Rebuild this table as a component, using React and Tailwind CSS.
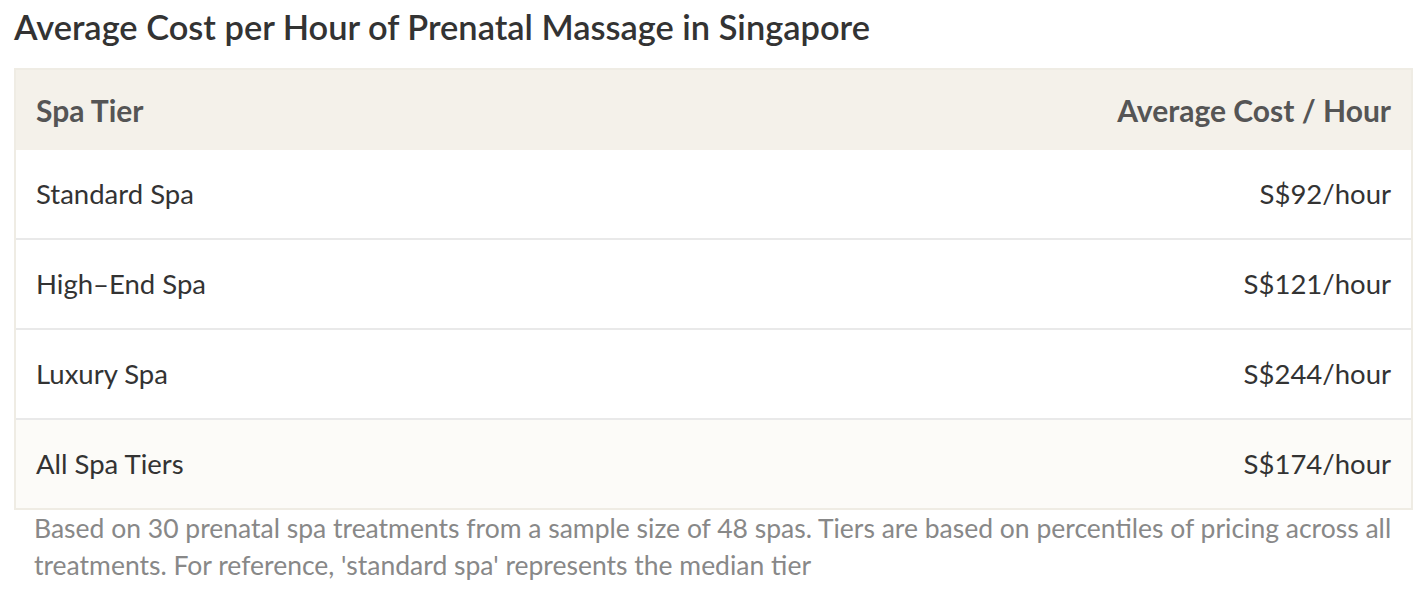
import React from 'react'

const rows = [
  { tier: 'Standard Spa', cost: 'S$92/hour' },
  { tier: 'High–End Spa', cost: 'S$121/hour' },
  { tier: 'Luxury Spa', cost: 'S$244/hour' },
]

const App = () => {
  return (
    <div className="w-[1428px] h-[590px] bg-white font-['Lato','Liberation_Sans',sans-serif] text-[#333]">
      <h1 className="pl-[14px] pt-[6px] h-[68px] text-[34.4px] font-semibold text-[#333] leading-[42px]">
        Average Cost per Hour of Prenatal Massage in Singapore
      </h1>

      <div className="mx-[14px] w-[1399px] border-2 border-[#efece4]">
        <div className="flex justify-between items-center h-[80px] px-[20px] bg-[#f4f1ea] text-[30px] font-bold text-[#555]">
          <span>Spa Tier</span>
          <span>Average Cost / Hour</span>
        </div>
        {rows.map((r) => (
          <div key={r.tier} className="flex justify-between items-center h-[90px] px-[20px] border-b-2 border-[#e9e9e9] text-[27.5px]">
            <span>{r.tier}</span>
            <span>{r.cost}</span>
          </div>
        ))}
        <div className="flex justify-between items-center h-[88px] px-[20px] bg-[#fcfbf8] text-[27.5px]">
          <span>All Spa Tiers</span>
          <span>S$174/hour</span>
        </div>
      </div>

      <p className="pl-[34px] pr-[20px] pt-0 text-[26.5px] leading-[37px] text-[#888]">
        Based on 30 prenatal spa treatments from a sample size of 48 spas. Tiers are based on percentiles of pricing across all treatments. For reference, 'standard spa' represents the median tier
      </p>
    </div>
  )
}

export default App
